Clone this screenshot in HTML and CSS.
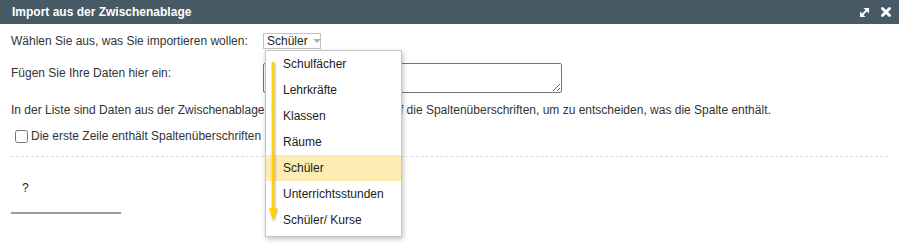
FILE: index.html
```html
<!DOCTYPE html>
<html lang="de">
<head>
  <meta charset="UTF-8" />
  <title>Import aus der Zwischenablage</title>
  <link rel="stylesheet" href="styles.css">
</head>
<body>
  <div class="dialog">
    <header>
      <span class="title">Import aus der Zwischenablage</span>
      <div class="tools">
        <svg class="tool" width="9" height="9" viewBox="0 0 9 9">
          <line x1="1.5" y1="7.5" x2="7.5" y2="1.5" stroke="#fff" stroke-width="1.8" />
          <polygon points="3.5,0 9,0 9,5.5" fill="#fff" />
          <polygon points="0,3.5 0,9 5.5,9" fill="#fff" />
        </svg>
        <svg class="tool" width="10" height="10" viewBox="0 0 10 10">
          <line x1="1.5" y1="1.5" x2="8.5" y2="8.5" stroke="#fff" stroke-width="2.8" stroke-linecap="round" />
          <line x1="8.5" y1="1.5" x2="1.5" y2="8.5" stroke="#fff" stroke-width="2.8" stroke-linecap="round" />
        </svg>
      </div>
    </header>

    <div class="content">
      <div class="form">
        <label class="lbl">Wählen Sie aus, was Sie importieren wollen:</label>
        <div class="select-wrap">
          <div class="select">Schüler <span class="caret"></span></div>
          <div class="menu">
            <svg class="arrow" width="12" height="164" viewBox="0 0 12 164">
              <line x1="5" y1="0" x2="5" y2="148" stroke="#ffd200" stroke-width="2.5" />
              <polygon points="1,146 9,146 5,159" fill="#ffd200" />
            </svg>
            <div class="item">Schulfächer</div>
            <div class="item">Lehrkräfte</div>
            <div class="item">Klassen</div>
            <div class="item">Räume</div>
            <div class="item active">Schüler</div>
            <div class="item">Unterrichtsstunden</div>
            <div class="item">Schüler/ Kurse</div>
          </div>
        </div>

        <label class="lbl lbl-top">Fügen Sie Ihre Daten hier ein:</label>
        <textarea class="paste"></textarea>
      </div>

      <p class="info">In der Liste sind Daten aus der Zwischenablage<span class="covered"> eingefügt. Klicken Sie a</span>uf die Spaltenüberschriften, um zu entscheiden, was die Spalte enthält.</p>

      <label class="check"><input type="checkbox" /> Die erste Zeile enthält Spaltenüberschriften</label>

      <div class="divider"></div>

      <div class="tab">?</div>
    </div>
  </div>
</body>
</html>
```

FILE: styles.css
```css
* {
  box-sizing: border-box;
}
html, body {
  margin: 0;
  background: #fff;
  font-family: "Liberation Sans", Arial, sans-serif;
  font-size: 12px;
  color: #333;
}
.dialog {
  min-height: 244px;
}

header {
  height: 24px;
  background-color: #475a65;
  color: white;
  display: flex;
  align-items: center;
  justify-content: space-between;
  padding: 0 8px 0 12px;
}
header .title {
  font-weight: bold;
}
.tools {
  display: flex;
  align-items: center;
  gap: 12px;
}
.tool {
  display: block;
}

.content {
  padding: 9px 11px 0;
}

.form {
  display: grid;
  grid-template-columns: 252px auto;
  row-gap: 14px;
  align-items: center;
}
.lbl-top {
  align-self: start;
  padding-top: 3px;
}
.select-wrap {
  position: relative;
}
.select {
  display: inline-flex;
  align-items: center;
  height: 16px;
  width: 58px;
  padding: 0 3px;
  border: 1px solid #c3c3c3;
  color: #222;
}
.caret {
  margin-left: 5px;
  border-left: 4px solid transparent;
  border-right: 4px solid transparent;
  border-top: 4px solid #b0b0b0;
}

.menu {
  position: absolute;
  left: 2px;
  top: 17px;
  width: 137px;
  padding-bottom: 3px;
  background: white;
  border: 1px solid #c6c6c6;
  box-shadow: 1px 2px 5px rgba(0, 0, 0, 0.25);
  z-index: 5;
}
.menu .item {
  height: 26px;
  line-height: 26px;
  padding-left: 17px;
  color: #222;
}
.menu .item.active {
  background-color: #fdedb2;
}
.arrow {
  position: absolute;
  left: 2px;
  top: 11px;
  filter: drop-shadow(1px 1px 1px rgba(0, 0, 0, 0.3));
}

.paste {
  width: 299px;
  height: 30px;
  border: 1px solid #767676;
  border-radius: 2px;
  margin: 0;
  font-family: inherit;
}

.info {
  margin: 10px 0 0;
  line-height: 14px;
}
.info .covered {
  visibility: hidden;
}

.check {
  display: flex;
  align-items: center;
  margin-top: 12px;
}
.check input {
  width: 13px;
  height: 13px;
  margin: 0 3px 0 4px;
}

.divider {
  margin-top: 13px;
  border-top: 1px dashed #dcdcdc;
}

.tab {
  width: 110px;
  padding: 24px 0 0 11px;
  height: 57px;
  border-bottom: 2px solid #8e9eab;
  color: #222;
}
```
